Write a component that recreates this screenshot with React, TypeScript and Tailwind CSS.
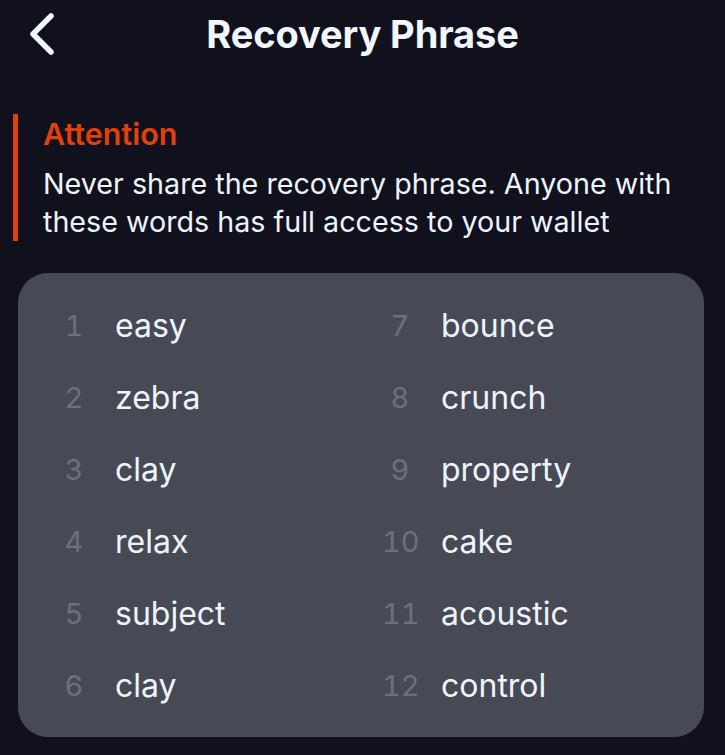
const words = [
  'easy',
  'zebra',
  'clay',
  'relax',
  'subject',
  'clay',
  'bounce',
  'crunch',
  'property',
  'cake',
  'acoustic',
  'control',
]

function WordCell({ index, word }: { index: number; word: string }) {
  return (
    <div className="flex h-[72px] items-center">
      <span className="w-[36px] text-center text-[29px] text-[#6d707b] tabular-nums">
        {index}
      </span>
      <span className="ml-[23px] text-[32px] text-[#eef4fb]">{word}</span>
    </div>
  )
}

export default function App() {
  const left = words.slice(0, 6)
  const right = words.slice(6)

  return (
    <div
      className="h-[755px] w-[725px] overflow-hidden bg-[#11111d]"
      style={{ fontFamily: 'Inter, "Noto Sans", sans-serif' }}
    >
      <div className="grid h-[68px] grid-cols-[1fr_auto_1fr] items-center">
        <button className="ml-[26px] flex h-[44px] w-[34px] items-center justify-center">
          <svg width="32" height="46" viewBox="0 0 32 46" fill="none">
            <path
              d="M24 5 L6 23 L24 41"
              stroke="#f2f7fd"
              strokeWidth="5.5"
              strokeLinecap="round"
              strokeLinejoin="round"
            />
          </svg>
        </button>
        <h1 className="text-[38px] font-bold tracking-[-0.1px] text-[#f2f7fd]">
          Recovery Phrase
        </h1>
        <div />
      </div>

      <div className="ml-[13px] mt-[46px] border-l-[5px] border-[#e0400c] pl-[25px] pr-[20px]">
        <div className="text-[30.5px] font-semibold leading-[40px] text-[#e0400c]">
          Attention
        </div>
        <p className="mt-[11px] text-[28.7px] leading-[38px] text-[#eef4fb]">
          Never share the recovery phrase. Anyone with these words has full
          access to your wallet
        </p>
      </div>

      <div className="ml-[18px] mt-[32px] grid w-[686px] grid-cols-[326px_1fr] rounded-[30px] bg-[#474a55] pb-[15px] pl-[38px] pt-[17px]">
        <div className="flex flex-col">
          {left.map((w, i) => (
            <WordCell key={i} index={i + 1} word={w} />
          ))}
        </div>
        <div className="flex flex-col">
          {right.map((w, i) => (
            <WordCell key={i} index={i + 7} word={w} />
          ))}
        </div>
      </div>
    </div>
  )
}
